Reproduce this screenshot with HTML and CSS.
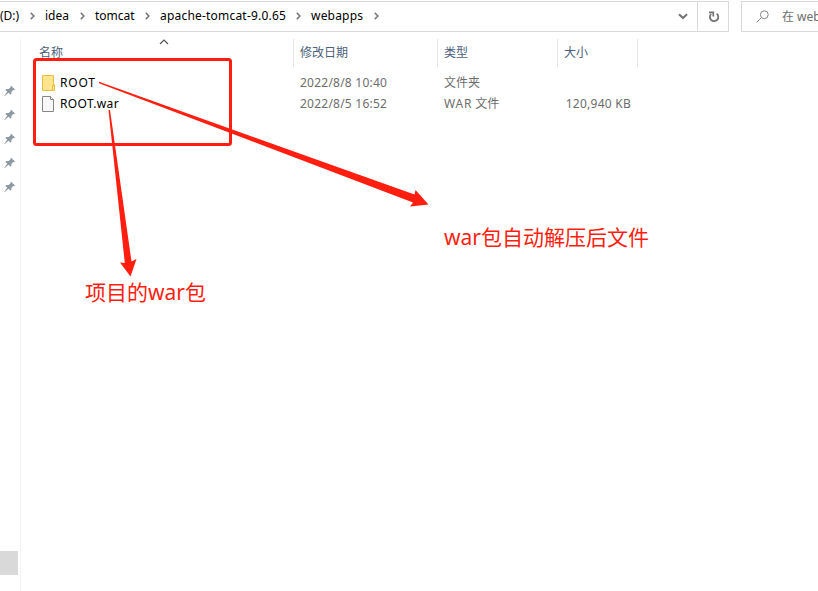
FILE: index.html
```html
<!DOCTYPE html>
<html lang="zh-CN">
<head>
<meta charset="utf-8">
<title>webapps</title>
<link rel="stylesheet" href="styles.css">
</head>
<body>
<svg class="defs" width="0" height="0" aria-hidden="true">
  <symbol id="chev" viewBox="0 0 5 8"><path d="M.8 .9 3.9 4 .8 7.1" fill="none" stroke="#777" stroke-width="1.5"/></symbol>
  <symbol id="pin" viewBox="0 0 12 12"><path d="M7.1.8 11 4.6 10 5.2 9.2 5 7.3 7 7.4 9 6.4 9.6 4.4 7.8.8 11 .3 10.7 3.2 6.8 1.5 5 2.1 4.1 4.5 4.1 6.7 2.3 6.5 1.3Z" fill="#8d99a3"/></symbol>
</svg>
<header class="toolbar">
  <div class="address">
    <nav class="crumbs">
      <span class="crumb"><span>(D:)</span><svg class="chev"><use href="#chev"/></svg></span>
      <span class="crumb"><span>idea</span><svg class="chev"><use href="#chev"/></svg></span>
      <span class="crumb"><span>tomcat</span><svg class="chev"><use href="#chev"/></svg></span>
      <span class="crumb"><span class="wide">apache-tomcat-9.0.65</span><svg class="chev"><use href="#chev"/></svg></span>
      <span class="crumb"><span class="wide">webapps</span><svg class="chev"><use href="#chev"/></svg></span>
    </nav>
    <svg class="drop" viewBox="0 0 10 7"><path d="M1 1.2 5 5 9 1.2" fill="none" stroke="#737373" stroke-width="2"/></svg>
    <div class="refresh"><svg viewBox="0 0 12 12"><path d="M8.6 2.6A4.2 4.2 0 1 1 3.2 2.9" fill="none" stroke="#737373" stroke-width="1.8"/><path d="M1 1.3H5.3V5.5" fill="none" stroke="#737373" stroke-width="1.7"/></svg></div>
  </div>
  <div class="search">
    <svg viewBox="0 0 13 13"><circle cx="8.3" cy="4.7" r="3.9" fill="none" stroke="#858585"/><path d="M5.5 7.5.6 12.4" stroke="#858585"/></svg>
    <span>在 web</span>
  </div>
</header>
<div class="main">
  <aside class="nav">
    <div class="pins">
      <svg><use href="#pin"/></svg><svg><use href="#pin"/></svg><svg><use href="#pin"/></svg><svg><use href="#pin"/></svg><svg><use href="#pin"/></svg>
    </div>
    <div class="thumb"></div>
  </aside>
  <section class="files">
    <div class="row head">
      <div class="name">名称</div><div>修改日期</div><div>类型</div><div>大小</div>
      <svg class="sort" viewBox="0 0 10 6"><path d="M1 5 5 1 9 5" fill="none" stroke="#555" stroke-width="1.2"/></svg>
    </div>
    <div class="row">
      <div class="name"><svg viewBox="0 0 13 16"><path d="M.5.5H11.5V9.5H12.5V15.5H.5Z" fill="#ffe490" stroke="#e9bf42"/><path d="M10.5 15V10.5H12.5" fill="none" stroke="#e9bf42"/></svg><span class="folder-name">ROOT</span></div>
      <div class="date">2022/8/8 10:40</div><div>文件夹</div><div></div>
    </div>
    <div class="row">
      <div class="name"><svg viewBox="0 0 13 16"><path d="M.5.5H8.5L11.5 3.5V15.5H.5Z" fill="#f8f8f8" stroke="#858585"/><path d="M8.5.5V3.5H11.5" fill="#fff" stroke="#858585"/></svg><span class="file-name">ROOT.war</span></div>
      <div class="date">2022/8/5 16:52</div><div><span class="ext">WAR</span> 文件</div><div class="size">120,940 KB</div>
    </div>
  </section>
</div>
<svg class="marks" width="818" height="591" viewBox="0 0 818 591">
  <rect x="34.5" y="59.5" width="196" height="85" rx="2" fill="none" stroke="#ff1e10" stroke-width="3"/>
  <path d="M99 81.8 414.5 194.5 415.5 190 428.5 204.5 410 206.5 413 202.5 99 83.2Z" fill="#ff1e10"/>
  <path d="M108.5 110H110L131.5 261.5 136.5 259 130.5 276.5 120 262.5 124.8 263Z" fill="#ff1e10"/>
</svg>
<div class="note note-left">项目的<span>war</span>包</div>
<div class="note note-right"><span>war</span>包自动解压后文件</div>
</body>
</html>
```
FILE: styles.css
```css
* { box-sizing: border-box; }
body {
  margin: 0;
  width: 818px;
  height: 591px;
  overflow: hidden;
  position: relative;
  background: #fff;
  color: #000;
  font: 12px/20px "Noto Sans", "Noto Sans CJK SC", sans-serif;
  white-space: nowrap;
}
svg { display: block; flex: none; }
.defs { position: absolute; }
.toolbar { display: flex; gap: 12px; height: 32px; padding-top: 1px; }
.address {
  display: flex;
  align-items: center;
  width: 729px;
  height: 31px;
  flex: none;
  border: 1px solid #d9d9d9;
  border-left: 0;
}
.crumbs { display: grid; grid-template-columns: 45px 50px 65px 151px 78px; width: 678px; padding-bottom: 1px; }
.crumb { display: flex; align-items: center; justify-content: space-between; padding-right: 10px; }
.wide { letter-spacing: .2px; }
.chev { width: 5px; height: 8px; }
.drop { width: 10px; height: 7px; }
.refresh {
  display: flex;
  align-items: center;
  justify-content: center;
  width: 31px;
  height: 29px;
  margin-left: 9px;
  border-left: 1px solid #d9d9d9;
}
.refresh svg { width: 12px; height: 12px; margin-left: 2px; }
.search {
  display: flex;
  align-items: center;
  gap: 13px;
  flex: 1;
  min-width: 0;
  overflow: hidden;
  padding-left: 14px;
  border: 1px solid #d9d9d9;
  border-right: 0;
  color: #6d6d6d;
}
.search svg { width: 13px; height: 13px; }
.main { display: flex; height: 559px; }
.nav { display: flex; flex-direction: column; justify-content: space-between; width: 21px; margin-top: 7px; padding: 46px 0 16px; border-right: 1px solid #f3f3f3; }
.pins { display: grid; gap: 12px; padding-left: 4px; }
.pins svg { width: 12px; height: 12px; }
.thumb { width: 18px; height: 24px; background: #d9d9d9; }
.files { padding-top: 7px; }
.row { display: grid; grid-template-columns: 273px 144px 120px 80px; height: 21px; align-items: center; color: #6d6d6d; }
.row > div { padding-left: 6px; }
.row > .name { display: flex; align-items: center; gap: 5px; padding-left: 21px; color: #000; }
.name svg { width: 13px; height: 16px; }
.folder-name { letter-spacing: .8px; }
.file-name { letter-spacing: .35px; }
.date { letter-spacing: .23px; }
.ext { letter-spacing: .8px; }
.head { position: relative; height: 28px; margin-bottom: 5px; color: #4c607a; }
.head > div { height: 28px; line-height: 28px; border-right: 1px solid #e5e5e5; }
.row.head > .name { padding-left: 18px; color: #4c607a; }
.sort { position: absolute; left: 138px; top: 0; width: 10px; height: 6px; }
.row > .size { padding: 0 7px 0 0; text-align: right; letter-spacing: .25px; }
.marks { position: absolute; inset: 0; }
.note { position: absolute; color: #ff1e10; font-size: 21px; line-height: 28px; }
.note-left { left: 85px; top: 278px; }
.note-right { left: 444px; top: 223px; }
```
